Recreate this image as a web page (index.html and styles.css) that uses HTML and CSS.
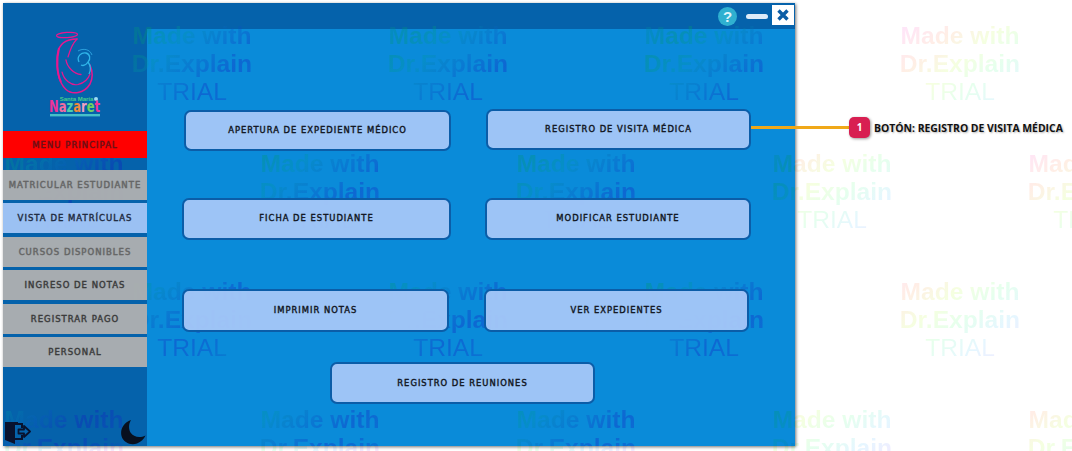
FILE: index.html
```html
<!DOCTYPE html>
<html lang="es">
<head>
<meta charset="utf-8">
<title>Menú principal</title>
<link rel="stylesheet" href="styles.css">
</head>
<body>
<div class="wm wm-page">
  <div></div><div class="tile"><span>Made with</span><span>Dr.Explain</span><span class="tr">TRIAL</span></div><div></div><div class="tile"><span>Made with</span><span>Dr.Explain</span><span class="tr">TRIAL</span></div><div></div><div class="tile"><span>Made with</span><span>Dr.Explain</span><span class="tr">TRIAL</span></div><div></div><div class="tile"><span>Made with</span><span>Dr.Explain</span><span class="tr">TRIAL</span></div><div></div>
  <div class="tile"><span>Made with</span><span>Dr.Explain</span><span class="tr">TRIAL</span></div><div></div><div class="tile"><span>Made with</span><span>Dr.Explain</span><span class="tr">TRIAL</span></div><div></div><div class="tile"><span>Made with</span><span>Dr.Explain</span><span class="tr">TRIAL</span></div><div></div><div class="tile"><span>Made with</span><span>Dr.Explain</span><span class="tr">TRIAL</span></div><div></div><div class="tile"><span>Made with</span><span>Dr.Explain</span><span class="tr">TRIAL</span></div>
  <div></div><div class="tile"><span>Made with</span><span>Dr.Explain</span><span class="tr">TRIAL</span></div><div></div><div class="tile"><span>Made with</span><span>Dr.Explain</span><span class="tr">TRIAL</span></div><div></div><div class="tile"><span>Made with</span><span>Dr.Explain</span><span class="tr">TRIAL</span></div><div></div><div class="tile"><span>Made with</span><span>Dr.Explain</span><span class="tr">TRIAL</span></div><div></div>
  <div class="tile"><span>Made with</span><span>Dr.Explain</span><span class="tr">TRIAL</span></div><div></div><div class="tile"><span>Made with</span><span>Dr.Explain</span><span class="tr">TRIAL</span></div><div></div><div class="tile"><span>Made with</span><span>Dr.Explain</span><span class="tr">TRIAL</span></div><div></div><div class="tile"><span>Made with</span><span>Dr.Explain</span><span class="tr">TRIAL</span></div><div></div><div class="tile"><span>Made with</span><span>Dr.Explain</span><span class="tr">TRIAL</span></div>
</div>

<div class="app">
  <div class="wm-clip">
    <div class="wm wm-app">
      <div></div><div class="tile"><span>Made with</span><span>Dr.Explain</span><span class="tr">TRIAL</span></div><div></div><div class="tile"><span>Made with</span><span>Dr.Explain</span><span class="tr">TRIAL</span></div><div></div><div class="tile"><span>Made with</span><span>Dr.Explain</span><span class="tr">TRIAL</span></div><div></div><div></div><div></div>
      <div class="tile"><span>Made with</span><span>Dr.Explain</span><span class="tr">TRIAL</span></div><div></div><div class="tile"><span>Made with</span><span>Dr.Explain</span><span class="tr">TRIAL</span></div><div></div><div class="tile"><span>Made with</span><span>Dr.Explain</span><span class="tr">TRIAL</span></div><div></div><div class="tile"><span>Made with</span><span>Dr.Explain</span><span class="tr">TRIAL</span></div><div></div><div></div>
      <div></div><div class="tile"><span>Made with</span><span>Dr.Explain</span><span class="tr">TRIAL</span></div><div></div><div class="tile"><span>Made with</span><span>Dr.Explain</span><span class="tr">TRIAL</span></div><div></div><div class="tile"><span>Made with</span><span>Dr.Explain</span><span class="tr">TRIAL</span></div><div></div><div></div><div></div>
      <div class="tile"><span>Made with</span><span>Dr.Explain</span><span class="tr">TRIAL</span></div><div></div><div class="tile"><span>Made with</span><span>Dr.Explain</span><span class="tr">TRIAL</span></div><div></div><div class="tile"><span>Made with</span><span>Dr.Explain</span><span class="tr">TRIAL</span></div><div></div><div class="tile"><span>Made with</span><span>Dr.Explain</span><span class="tr">TRIAL</span></div><div></div><div></div>
    </div>
  </div>

  <aside class="side">
    <div class="logo">
      <svg width="144" height="128" viewBox="3 3 144 128" aria-label="Santa María Nazaret">
        <ellipse cx="67" cy="35" rx="10.500" ry="2.600" fill="none" stroke="#e8178f" stroke-width="1.200" transform="rotate(-4 67 35)"/>
        <path d="M77 39C65 39 59 44 57.500 54C56 67 58 82 66 89.500C72 95 84 94 90 84C93 78 93 72 90 65" fill="none" stroke="#e8178f" stroke-width="1.500" stroke-linecap="round"/>
        <path d="M59 48C56 60 57 74 61 82" fill="none" stroke="#e8178f" stroke-width="2"/>
        <path d="M77 39C72 44 70 50 68 57" fill="none" stroke="#e8178f" stroke-width="1.200" stroke-linecap="round"/>
        <path d="M66 60C67 67 74 74 81 74.500" fill="none" stroke="#e8178f" stroke-width="1.300" stroke-linecap="round"/>
        <path d="M62 72C64 80 71 86 78 84.500C84 83 88 80 90 74" fill="none" stroke="#e8178f" stroke-width="1.200" stroke-linecap="round"/>
        <path d="M78 51C83 48 90 49 92 55" fill="none" stroke="#2b9fdc" stroke-width="1"/>
        <path d="M79 62C76 56 82 52 86 53C90 54 91 59 88 62C86 65 83 66 81 65" fill="none" stroke="#2fb4e8" stroke-width="1.300"/>
        <path d="M88 62C91 66 91 70 89 74" fill="none" stroke="#2fb4e8" stroke-width="1.300"/>
        <text class="logo-santa" x="76.500" y="101" text-anchor="middle">Santa María</text>
        <circle cx="96" cy="99" r="2" fill="#9fdcf4"/>
        <text class="logo-name" x="49" y="112" textLength="51" lengthAdjust="spacingAndGlyphs"><tspan fill="#f0329a">N</tspan><tspan fill="#f06ca0">a</tspan><tspan fill="#4fd0a8">z</tspan><tspan fill="#f08a3a">a</tspan><tspan fill="#f0a0c0">r</tspan><tspan fill="#6fd060">e</tspan><tspan fill="#f0329a">t</tspan></text>
        <rect x="50" y="114" width="50" height="2.400" fill="#46c0c8"/>
      </svg>
    </div>
    <nav class="menu">
      <div class="item item-red">MENU PRINCIPAL</div>
      <div class="item item-grey item-faded">MATRICULAR ESTUDIANTE</div>
      <div class="item item-blue">VISTA DE MATRÍCULAS</div>
      <div class="item item-grey item-faded">CURSOS DISPONIBLES</div>
      <div class="item item-grey">INGRESO DE NOTAS</div>
      <div class="item item-grey">REGISTRAR PAGO</div>
      <div class="item item-grey">PERSONAL</div>
    </nav>
    <div class="foot">
      <svg width="27" height="26" viewBox="0 0 27 26" aria-label="Salir">
        <path d="M1 3H14V6H11V25L1 21Z" fill="#08122e"/>
        <path d="M11 5H18V9M18 16V20H11" fill="none" stroke="#08122e" stroke-width="2"/>
        <path d="M14.500 10.500H20V7L26 12.500L20 18V14.500H14.500Z" fill="none" stroke="#08122e" stroke-width="1.800" stroke-linejoin="round"/>
      </svg>
      <svg width="26" height="26" viewBox="0 0 26 26" aria-label="Modo noche">
        <path d="M11 1C3 4 0 11 1.500 17C3.500 24 11 26.500 17 24.500C21 23 24 20 25.500 16.500C19.500 19.500 13.500 18 10.500 13.500C8.500 10 8.500 5 11 1Z" fill="#08101f"/>
      </svg>
    </div>
  </aside>

  <div class="body">
    <header class="top">
      <span class="help">?</span>
      <span class="min"></span>
      <span class="close">
        <svg width="14" height="14" viewBox="0 0 14 14"><path d="M2.500 2.500L11.500 11.500M11.500 2.500L2.500 11.500" stroke="#0b5da6" stroke-width="3.400"/></svg>
      </span>
    </header>
    <main class="panel">
      <div class="row row-1">
        <button class="btn btn-a">APERTURA DE EXPEDIENTE MÉDICO</button>
        <button class="btn btn-b">REGISTRO DE VISITA MÉDICA</button>
      </div>
      <div class="row row-2">
        <button class="btn btn-c">FICHA DE ESTUDIANTE</button>
        <button class="btn btn-d">MODIFICAR ESTUDIANTE</button>
      </div>
      <div class="row row-3">
        <button class="btn btn-e">IMPRIMIR NOTAS</button>
        <button class="btn btn-f">VER EXPEDIENTES</button>
      </div>
      <div class="row row-4">
        <button class="btn btn-g">REGISTRO DE REUNIONES</button>
      </div>
    </main>
  </div>
</div>

<div class="callout">
  <span class="line"></span>
  <span class="badge">1</span>
  <span class="label">BOTÓN: REGISTRO DE VISITA MÉDICA</span>
</div>
</body>
</html>
```
FILE: styles.css
```css
* { box-sizing: border-box; }
html, body { margin: 0; height: 100%; }
body {
  position: relative;
  width: 1072px;
  height: 451px;
  overflow: hidden;
  background: #fff;
  padding: 3px 0 0 3px;
  font-family: "DejaVu Sans", sans-serif;
}

/* watermark grid: 128px checkerboard */
.wm {
  position: absolute;
  display: grid;
  grid-template-columns: repeat(9, 128px);
  grid-auto-rows: 127.800px;
  font: bold 24.600px/28px "Liberation Sans", sans-serif;
}
.tile {
  display: flex;
  flex-direction: column;
  align-items: center;
  justify-content: center;
  padding-top: 1px;
  white-space: nowrap;
}
.tile span {
  display: block;
  color: transparent;
  -webkit-background-clip: text;
  background-clip: text;
  background-attachment: fixed;
}
.tile .tr { font-weight: normal; }
.wm-page {
  left: 0;
  top: 0;
}
.wm-page .tile span {
  background-image: repeating-linear-gradient(140deg,
    hsl(140,100%,95%) 0, hsl(200,100%,95%) 29px, hsl(260,100%,96%) 58px,
    hsl(320,100%,95%) 87px, hsl(20,100%,95%) 116px, hsl(80,100%,94%) 145px, hsl(140,100%,95%) 173px);
}
.wm-clip {
  position: absolute;
  inset: 0;
  overflow: hidden;
}
.wm-app {
  left: -3px;
  top: -3px;
}
.wm-app .tile span {
  background-image: repeating-linear-gradient(140deg,
    hsla(215,90%,40%,.3) 0, hsla(240,80%,42%,.3) 29px, hsla(230,85%,42%,.3) 58px,
    hsla(195,100%,34%,.3) 87px, hsla(165,100%,30%,.34) 116px, hsla(185,100%,32%,.3) 145px, hsla(215,90%,40%,.3) 173px);
}

/* application window */
.app {
  position: relative;
  display: flex;
  width: 792px;
  height: 443px;
  background: #0a8bd9;
  box-shadow: 1px 1px 3px rgba(0, 0, 0, .55);
}
.side {
  display: flex;
  flex-direction: column;
  flex: 0 0 144px;
  background: #0562ab;
}
.logo { height: 128px; }
.logo svg { display: block; }
.logo-santa { font: bold 6px "Liberation Sans", sans-serif; fill: #45d08c; }
.logo-name { font: bold 15px "DejaVu Sans", sans-serif; }

.menu {
  position: relative;
  z-index: 1;
  display: flex;
  flex-direction: column;
  gap: 3.400px;
}
.item {
  display: flex;
  align-items: center;
  justify-content: center;
  height: 30px;
  font-size: 8.500px;
  letter-spacing: 1px;
  -webkit-text-stroke: .3px currentColor;
  text-shadow: 0 0 1px rgba(0, 0, 0, .25);
  white-space: nowrap;
}
.item-red {
  height: 27px;
  margin-bottom: 8.600px;
  background: #ff0000;
  color: #6b1018;
}
.item-grey { background: rgba(176, 176, 176, .95); color: #3a3a3a; }
.item-faded { color: #666; }
.item-blue { background: rgba(165, 199, 248, .94); color: #1f2a40; }

.foot {
  position: relative;
  z-index: 1;
  display: flex;
  justify-content: space-between;
  align-items: flex-end;
  margin-top: auto;
  padding: 0 1px 1px 1px;
}
.foot svg { display: block; }

.body {
  flex: 1;
  display: flex;
  flex-direction: column;
}
.top {
  display: flex;
  justify-content: flex-end;
  align-items: center;
  height: 26px;
  padding: 0 1px 0 0;
  background: #0562ab;
}
.help {
  position: relative;
  z-index: 1;
  width: 19px;
  height: 19px;
  margin-right: 9px;
  border-radius: 50%;
  background: #2fb0d0;
  color: #dff4fa;
  font: bold 15px/19px "Liberation Sans", sans-serif;
  text-align: center;
}
.min {
  position: relative;
  z-index: 1;
  width: 22px;
  height: 5px;
  margin-right: 4px;
  border-radius: 3px;
  background: #dcebf8;
}
.close {
  position: relative;
  z-index: 1;
  display: flex;
  align-items: center;
  justify-content: center;
  width: 22px;
  height: 20px;
  margin-top: -2px;
  background: #fff;
}
.panel {
  flex: 1;
  display: flex;
  flex-direction: column;
}
.row {
  position: relative;
  z-index: 1;
  display: flex;
  align-items: flex-start;
}
.row-1 { padding: 81px 0 0 37px; height: 169px; }
.row-2 { padding: 0 0 0 35px; height: 91px; }
.row-3 { padding: 0 0 0 35px; height: 73px; }
.row-4 { padding: 0 0 0 183px; }

.btn {
  height: 41px;
  padding: 0 0 2px;
  border: 2px solid #0b5da8;
  border-radius: 7px;
  background: rgba(165, 199, 248, .95);
  color: #101420;
  font: 8.400px "DejaVu Sans", sans-serif;
  letter-spacing: 1px;
  -webkit-text-stroke: .3px currentColor;
  text-shadow: 0 0 1px rgba(0, 0, 0, .25);
  white-space: nowrap;
}
.btn-a { width: 267px; }
.btn-b { width: 265px; margin: -1px 0 0 35px; }
.btn-c { width: 269px; height: 42px; }
.btn-d { width: 266px; height: 42px; margin-left: 34px; }
.btn-e { width: 267px; height: 43px; }
.btn-f { width: 265px; height: 43px; margin-left: 35px; }
.btn-g { width: 265px; height: 42px; padding: 0; }

/* annotation over the screenshot */
.callout {
  position: absolute;
  left: 751px;
  top: 117px;
  display: flex;
  align-items: center;
  height: 21px;
}
.line {
  width: 98px;
  height: 3px;
  background: #f0a818;
}
.badge {
  width: 21px;
  height: 21px;
  border-radius: 5px;
  background: #d81f52;
  box-shadow: 1px 1px 3px rgba(0, 0, 0, .4);
  color: #fff;
  font: bold 10px/21px "Open Sans", sans-serif;
  text-align: center;
}
.label {
  margin-left: 4px;
  color: #111;
  font: bold 10.400px "Open Sans", sans-serif;
  text-shadow: 1px 1px 2px rgba(0, 0, 0, .3);
  white-space: nowrap;
}
```
